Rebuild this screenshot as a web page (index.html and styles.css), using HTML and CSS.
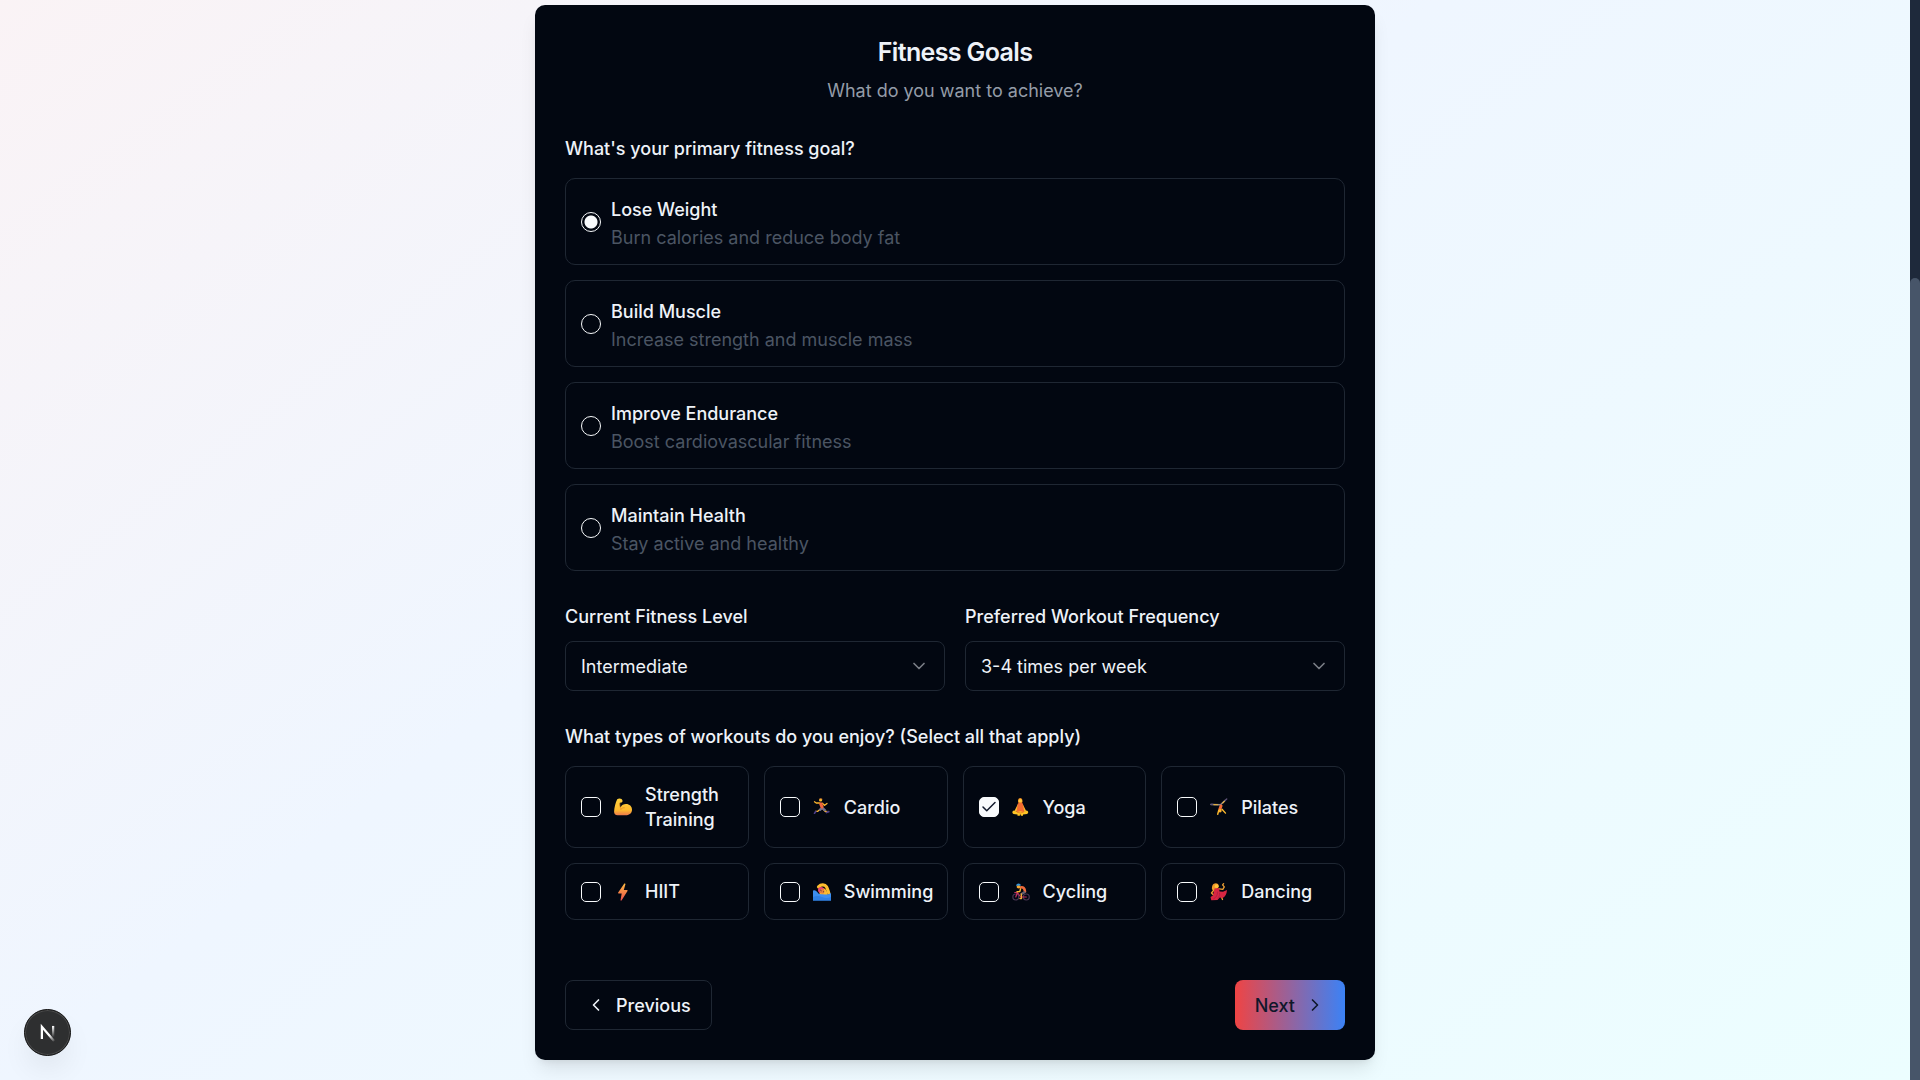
FILE: index.html
```html
<!DOCTYPE html>
<html lang="en">
<head>
<meta charset="utf-8">
<meta name="viewport" content="width=device-width, initial-scale=1">
<title>Fitness Goals</title>
<link rel="stylesheet" href="styles.css">
</head>
<body>
<main class="page">
  <form class="card">
    <header class="card-header">
      <h1 class="title">Fitness Goals</h1>
      <p class="subtitle">What do you want to achieve?</p>
    </header>

    <fieldset class="group">
      <legend class="heading">What's your primary fitness goal?</legend>
      <div class="goals">
        <label class="goal"><input class="radio" type="radio" name="goal" checked><span class="goal-text"><span class="goal-name">Lose Weight</span><span class="goal-note">Burn calories and reduce body fat</span></span></label>
        <label class="goal"><input class="radio" type="radio" name="goal"><span class="goal-text"><span class="goal-name">Build Muscle</span><span class="goal-note">Increase strength and muscle mass</span></span></label>
        <label class="goal"><input class="radio" type="radio" name="goal"><span class="goal-text"><span class="goal-name">Improve Endurance</span><span class="goal-note">Boost cardiovascular fitness</span></span></label>
        <label class="goal"><input class="radio" type="radio" name="goal"><span class="goal-text"><span class="goal-name">Maintain Health</span><span class="goal-note">Stay active and healthy</span></span></label>
      </div>
    </fieldset>

    <div class="selects">
      <div class="field">
        <label class="field-label" for="level">Current Fitness Level</label>
        <div class="select-wrap">
          <select class="select" id="level"><option>Beginner</option><option selected>Intermediate</option><option>Advanced</option></select>
          <svg class="chevron" viewBox="0 0 24 24"><path d="m6 9 6 6 6-6"/></svg>
        </div>
      </div>
      <div class="field">
        <label class="field-label" for="frequency">Preferred Workout Frequency</label>
        <div class="select-wrap">
          <select class="select" id="frequency"><option>1-2 times per week</option><option selected>3-4 times per week</option><option>5+ times per week</option></select>
          <svg class="chevron" viewBox="0 0 24 24"><path d="m6 9 6 6 6-6"/></svg>
        </div>
      </div>
    </div>

    <fieldset class="group">
      <legend class="heading">What types of workouts do you enjoy? (Select all that apply)</legend>
      <div class="workouts">
        <label class="workout"><input class="check" type="checkbox">
          <svg class="emoji" viewBox="0 0 18 18"><defs><linearGradient id="skin" x1="0" y1="0" x2="0" y2="1"><stop offset="0" stop-color="#ffd23c"/><stop offset=".7" stop-color="#fdb92e"/><stop offset="1" stop-color="#ee7a4c"/></linearGradient></defs><path fill="url(#skin)" d="M3.2 1.2C4.200.3 6.400 0 7.500 1c1 .8 1.400 2.200.7 3-.6.8-1.700.6-2.400.8-.3 1.600-.1 3.200.8 4.600C7.600 7 9.600 6 12 6c3.500 0 6 2.400 6 5.600 0 3.300-2 5.400-5.200 5.600H3.600C1.200 17.200 0 15.800.1 13.500.3 9.400 1.500 4.600 3.200 1.200Z"/><path d="M5.900 5.300C5.500 8 6 9.500 7.200 11M6.500 12c1-1.900 2.600-2.500 4.200-2.200" fill="none" stroke="#e58b25" stroke-width=".8"/></svg>
          <span>Strength Training</span></label>
        <label class="workout"><input class="check" type="checkbox">
          <svg class="emoji" viewBox="0 0 18 18" fill="none" stroke-linecap="round" stroke-linejoin="round"><path d="m7.500 11-2.700 2.300H2.500" stroke="#fbb52d" stroke-width="1.300"/><path d="m10 11 2.300 2.500H14" stroke="#fbb52d" stroke-width="1.300"/><path d="m9 10-2 1.800M9.500 10l2.300 2.200" stroke="#75708c" stroke-width="2.400"/><path d="m1.500 15.200 1.300-1.700M13.500 14.500l2.300-.9" stroke="#4c3d88" stroke-width="1.700"/><path d="M6.500 5H3.200L1.500 3.800M9.500 5.200l1.800 2.200 2.700-2" stroke="#fbb52d" stroke-width="1.300"/><path d="m7.800 6 1.200 2.900" stroke="#f0653e" stroke-width="3.200"/><circle cx="7.600" cy="2" r="1.600" fill="#fdbd2e"/><path d="M6.500.9Q8-.1 9.200 1" stroke="#b9672e" stroke-width=".8"/></svg>
          <span>Cardio</span></label>
        <label class="workout"><input class="check" type="checkbox" checked>
          <svg class="emoji" viewBox="0 0 18 18"><path fill="#f18a20" d="M6 3.200C6 .9 7 0 8.200 0s2.300 1 2.300 3.200L10 5.500H6.500Z"/><circle cx="8.300" cy="2.800" r="1.800" fill="#ffc83d"/><path fill="#fdb72b" d="m5.800 6.200-3.500 7 2 .8 3-5h2l3 5 2-.8-3.500-7Z"/><path fill="#f36b31" d="M5.800 5.500Q8.300 4 10.900 5.500l1.300 8.500H4.500Z"/><path fill="#ffc426" d="M2 12.500 5 14l3.300-.8 3.300.8 3-1.500c2 .7 2.200 2.500.4 3.500l-4 .4v1.400H8.800v-1.200h-.9v1.200H5.500v-1.400l-4-.4c-1.800-1-1.400-2.900.5-3.500Z"/><path d="m5 14.200 3.300.8 3.300-.8" stroke="#e98b23" fill="none"/></svg>
          <span>Yoga</span></label>
        <label class="workout"><input class="check" type="checkbox">
          <svg class="emoji" viewBox="0 0 18 18" fill="none" stroke-linecap="round" stroke-linejoin="round"><path d="m1 6.600 9.500.2 4.500-4.300" stroke="#8a8790" stroke-width="1.500"/><path d="M.7 6.400h2.500M15 2.500l1.700-1.600" stroke="#5f5478" stroke-width="1.400"/><path d="m3.800 6.600 4 .2M12.700 5l1.600-1.700" stroke="#e8b13c" stroke-width="1.100"/><path d="m11 8-1.200 3.200" stroke="#f36c34" stroke-width="3"/><path d="m8.700 12.500-1 3.700M12 11.300l3.500 3.800" stroke="#ffbc2f" stroke-width="1.400"/><circle cx="10" cy="12.800" r="1.700" fill="#fdb12d"/></svg>
          <span>Pilates</span></label>
        <label class="workout"><input class="check" type="checkbox">
          <svg class="emoji" viewBox="0 0 18 18"><defs><linearGradient id="bolt" x1="0" y1="0" x2="0" y2="1"><stop offset="0" stop-color="#fdbb43"/><stop offset="1" stop-color="#ef4f4b"/></linearGradient></defs><path fill="url(#bolt)" d="M10.300.6 4.200 9.500q-.5 1 .5 1h3L6.500 17.200q.5.9 1.200 0l5.800-9.100q.5-1-.5-1H9.800L11.500 1Q11.200 0 10.300.6Z"/></svg>
          <span>HIIT</span></label>
        <label class="workout"><input class="check" type="checkbox">
          <svg class="emoji" viewBox="0 0 18 18"><path fill="none" stroke="#fdbd2e" stroke-width="3.200" stroke-linecap="round" stroke-linejoin="round" d="M5.500 3.800C8 1.200 12 1.400 13.500 3.800c1.200 2 1.500 4 2.300 6.200"/><path fill="#fdbb2d" d="M6 7.500C8 3.500 14 4 15 13H7Z"/><circle cx="8" cy="7" r="3" fill="#e9466f"/><circle cx="9.200" cy="8.400" r="2.300" fill="#e8823c"/><path d="m7.200 7 1.500 1M10 9l1-.5" stroke="#6b4034"/><path fill="#3d8ef0" d="M0 7.500q2.500-1 4 1.200 1.500 2.600 4.300 2.500 2.200-.2 3.700.3 3.500.5 6-1.500v7.500H0Z"/><path fill="#2f80e4" d="M0 14q4.500-2 9 0t9 0v3.500H0Z"/></svg>
          <span>Swimming</span></label>
        <label class="workout"><input class="check" type="checkbox">
          <svg class="emoji" viewBox="0 0 18 18" fill="none" stroke-linecap="round" stroke-linejoin="round"><circle cx="3.800" cy="14" r="3" stroke="#493653" stroke-width="1.100"/><circle cx="14.300" cy="14" r="3" stroke="#493653" stroke-width="1.100"/><path d="m3.800 14 1.500-4.500 3.500 4.500h5.500M4.500 9.500H2.800" stroke="#c22f60" stroke-width="1.200"/><path d="M8.500 4.500c2.700-.8 4.200.8 4.500 4" stroke="#ed6a3b" stroke-width="2.600"/><path d="M12.500 9.300 9.500 11" stroke="#68606e" stroke-width="2.200"/><path d="m9.300 11 .2 4.500H8" stroke="#f2a735" stroke-width="1.400"/><path d="M8.500 6 7.800 8.500 5 8.800" stroke="#fab233" stroke-width="1.400"/><circle cx="6.500" cy="3.800" r="1.800" fill="#f5a832"/><path d="M4 2.800C4.500-.2 8.400-.3 9 2.500Z" fill="#3797dc"/></svg>
          <span>Cycling</span></label>
        <label class="workout"><input class="check" type="checkbox">
          <svg class="emoji" viewBox="0 0 18 18" stroke-linecap="round" stroke-linejoin="round"><path fill="#f29a29" d="M2 6.500C1.500 3 3 .2 6 .3c2.500.2 3.300 2.200 2.200 4.500L5 8Z"/><circle cx="6.700" cy="3.200" r="1.900" fill="#ffc43a"/><path fill="none" stroke="#f0a134" stroke-width="1.300" d="m9.300 5.800 3.500.6 1.500-2.500-1.700-2 1-1.200M3.500 7.500l-2 2.500 2 2M11 13l1.500 3.500"/><path fill="#d82642" d="M4.500 5.500 9 5l.5 3.500 3.500.3 4-1.800c-.2 4-1.700 6.500-4.300 8l-3-.4L7.500 17l-6.200.2L.5 14l2.500-1.500Z"/><path fill="none" stroke="#a91d43" stroke-width=".8" d="M7.500 9C8 12 6 14.500 3.500 16M9.500 10c.5 2-.3 3.500-1.500 5"/></svg>
          <span>Dancing</span></label>
      </div>
    </fieldset>

    <footer class="actions">
      <button class="button outline" type="button"><svg class="arrow" viewBox="0 0 24 24"><path d="m15 18-6-6 6-6"/></svg>Previous</button>
      <button class="button primary" type="button">Next<svg class="arrow" viewBox="0 0 24 24"><path d="m9 18 6-6-6-6"/></svg></button>
    </footer>
  </form>
</main>
<div class="scroll-track"><div class="scroll-thumb"></div></div>
<button class="dev-badge" type="button" aria-label="Open developer tools">
  <svg class="dev-logo" viewBox="0 0 48 48"><defs><linearGradient id="n-stem" x1="0" y1="17" x2="0" y2="29" gradientUnits="userSpaceOnUse"><stop stop-color="#fff"/><stop offset="1" stop-color="#fff" stop-opacity="0"/></linearGradient><linearGradient id="n-diag" x1="26" y1="27" x2="32" y2="34" gradientUnits="userSpaceOnUse"><stop stop-color="#fff"/><stop offset="1" stop-color="#fff" stop-opacity="0"/></linearGradient></defs><path d="M18 31V18L31 33" fill="none" stroke="url(#n-diag)" stroke-width="2.400"/><path d="M30 17v12" stroke="url(#n-stem)" stroke-width="2.400"/></svg>
</button>
</body>
</html>
```
FILE: styles.css
```css
* { box-sizing: border-box; }

body {
  margin: 0;
  min-height: 100vh;
  background: linear-gradient(143deg, #fef2f2 -15%, #eff6ff 43%, #ecfeff 100%);
  color: #eef2f8;
  font: 400 18px/25px Inter, sans-serif;
}

.page {
  display: flex;
  justify-content: center;
  padding: 5px 20px 20px 10px;
  min-height: 100vh;
}

.card {
  display: flex;
  flex-direction: column;
  gap: 30px;
  width: 100%;
  max-width: 840px;
  padding: 30px;
  border-radius: 10px;
  background: #020711;
  box-shadow: 0 12px 19px -4px rgb(0 0 0 / 10%), 0 5px 8px -5px rgb(0 0 0 / 10%);
}

.card-header {
  display: flex;
  flex-direction: column;
  gap: 8px;
  text-align: center;
}

.title {
  margin: 0;
  font-size: 25px;
  line-height: 35px;
  font-weight: 600;
  letter-spacing: -0.025em;
}

.subtitle { margin: 0; color: #949ca8; }

.group {
  min-width: 0;
  margin: 0;
  padding: 0;
  border: 0;
}

.heading {
  padding: 0;
  margin-bottom: 13px;
  font-weight: 500;
  line-height: 32px;
}

.goals { display: grid; gap: 15px; }

.goal, .workout {
  display: flex;
  align-items: center;
  gap: 10px;
  padding: 15px;
  border: 1px solid #1f2733;
  border-radius: 10px;
}

.goal-text { display: flex; flex-direction: column; }
.goal-name { font-weight: 500; line-height: 32px; }
.goal-note { color: #4b5563; line-height: 23px; }

.radio, .check {
  flex: none;
  appearance: none;
  width: 20px;
  height: 20px;
  margin: 0;
  border: 1px solid #f8fafc;
}

.radio { border-radius: 50%; }
.radio:checked { background: radial-gradient(circle, #f8fafc 6px, transparent 7px); }

.check { border-radius: 5px; }
.check:checked {
  background: #f8fafc url("data:image/svg+xml,%3Csvg xmlns='http://www.w3.org/2000/svg' viewBox='0 0 24 24' fill='none' stroke='%230f172a' stroke-width='2' stroke-linecap='round' stroke-linejoin='round'%3E%3Cpath d='M20 6 9 17l-5-5'/%3E%3C/svg%3E") center / 18px no-repeat;
}

.selects {
  display: grid;
  grid-template-columns: 1fr 1fr;
  gap: 20px;
}

.field {
  display: flex;
  flex-direction: column;
  gap: 8px;
}

.field-label { font-weight: 500; line-height: 32px; }

.select-wrap { display: grid; align-items: center; }
.select-wrap > * { grid-area: 1 / 1; }

.select {
  appearance: none;
  width: 100%;
  height: 50px;
  padding: 0 15px;
  border: 1px solid #1f2733;
  border-radius: 8px;
  background: transparent;
  color: inherit;
  font: inherit;
}

.chevron, .arrow {
  width: 20px;
  height: 20px;
  fill: none;
  stroke: currentColor;
  stroke-width: 2;
  stroke-linecap: round;
  stroke-linejoin: round;
}

.chevron {
  justify-self: end;
  margin-right: 16px;
  opacity: 0.5;
  pointer-events: none;
}

.workouts {
  display: grid;
  grid-template-columns: repeat(4, minmax(0, 1fr));
  gap: 15px;
}

.workout { font-weight: 500; }

.emoji {
  flex: none;
  width: 18px;
  height: 18px;
  margin: 0 3px;
}

.actions {
  display: flex;
  justify-content: space-between;
  padding-top: 30px;
}

.button {
  display: flex;
  align-items: center;
  gap: 10px;
  height: 50px;
  padding: 0 20px;
  border: 0;
  border-radius: 8px;
  color: inherit;
  font: inherit;
  font-weight: 500;
}

.outline { border: 1px solid #1f2733; background: transparent; }
.primary { background: linear-gradient(to right, #ef4444, #3b82f6); color: #0f172a; }

.scroll-track {
  position: fixed;
  inset: 0 0 0 auto;
  width: 10px;
  padding-top: 278px;
  background: #1e293b;
}

.scroll-thumb {
  height: 100%;
  border-radius: 5px 5px 0 0;
  background: #475569;
}

.dev-badge {
  position: fixed;
  left: 24px;
  bottom: 24px;
  width: 47px;
  height: 47px;
  padding: 0;
  border: 1px solid #111;
  border-radius: 50%;
  background: #2e2f30;
  box-shadow: inset 0 0 0 1px #4a4a4a, 0 16px 32px -8px rgb(0 0 0 / 12%);
}

.dev-logo { display: block; width: 45px; height: 45px; }
```
